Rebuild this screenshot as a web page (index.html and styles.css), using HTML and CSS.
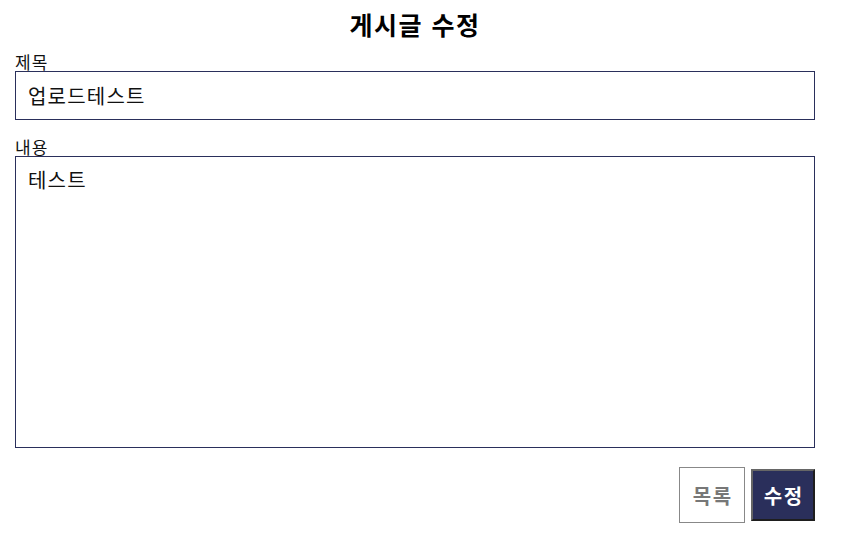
FILE: index.html
```html
<!DOCTYPE html>
<html lang="ko">
<head>
<meta charset="utf-8">
<link rel="stylesheet" href="styles.css">
</head>
<body>
<div class="page">
  <h2 class="title">게시글 수정</h2>
  <form class="form">
    <label class="label" for="t">제목</label>
    <input class="input" id="t" type="text" value="업로드테스트">
    <label class="label label-gap" for="c">내용</label>
    <textarea class="textarea" id="c">테스트</textarea>
    <div class="actions">
      <button type="button" class="btn btn-list">목록</button>
      <button type="button" class="btn btn-submit">수정</button>
    </div>
  </form>
</div>
</body>
</html>
```
FILE: styles.css
```css
html, body {
  margin: 0;
  padding: 0;
  background: #fff;
}
body {
  font-family: "Noto Sans CJK KR", "Noto Sans", sans-serif;
  color: #111;
}
.page {
  width: 800px;
  padding: 0 15px;
}
.title {
  margin: 6px 0 0;
  font-size: 25px;
  font-weight: 700;
  letter-spacing: 1.5px;
  text-align: center;
  line-height: 36px;
  color: #000;
}
.form {
  display: flex;
  flex-direction: column;
  margin-top: 10px;
}
.label {
  font-size: 17px;
  letter-spacing: 1px;
  line-height: 19px;
  height: 19px;
  color: #111;
}
.label-gap {
  margin-top: 17px;
}
.input, .textarea {
  box-sizing: border-box;
  width: 800px;
  border: 1px solid #2a2f5b;
  font-family: "Noto Sans CJK KR", "Noto Sans", sans-serif;
  font-size: 20px;
  letter-spacing: 1.2px;
  color: #111;
  padding: 0 12px;
  margin: 0;
  outline: none;
}
.input {
  height: 49px;
}
.textarea {
  height: 292px;
  padding-top: 10px;
  resize: none;
  line-height: 26px;
}
.actions {
  display: flex;
  justify-content: flex-end;
  align-items: center;
  gap: 6px;
  margin-top: 19px;
}
.btn {
  font-family: "Noto Sans CJK KR", "Noto Sans", sans-serif;
  font-weight: 700;
  font-size: 20px;
  letter-spacing: 1.5px;
  box-sizing: border-box;
  padding: 0 0 0 1.5px;
  cursor: pointer;
}
.btn-list {
  width: 66px;
  height: 56px;
  background: #fff;
  color: #777;
  border: 1px solid #888;
}
.btn-submit {
  width: 64px;
  height: 52px;
  background: #2a2f5b;
  color: #fff;
  border-style: solid;
  border-width: 2px;
  border-color: #666 #1e1e1e #1e1e1e #666;
}
```
